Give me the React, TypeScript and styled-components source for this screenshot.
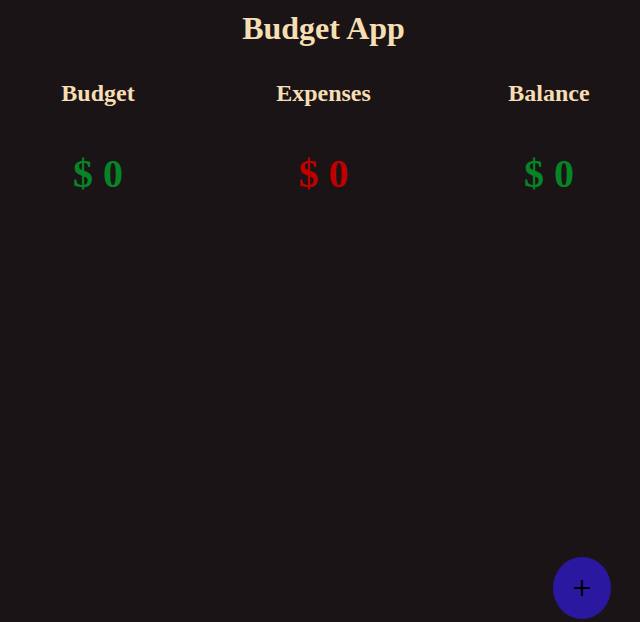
import React from "react";
import styled, { createGlobalStyle } from "styled-components";

const Global = createGlobalStyle`
  html, body { margin: 0; padding: 0; }
  body {
    background: #1b1416;
    font-family: "Liberation Serif", "Times New Roman", serif;
    min-height: 622px;
  }
`;

const Page = styled.div`
  padding: 0 16px 0 23px;
`;

const Title = styled.h1`
  margin: 0;
  padding-top: 10px;
  font-size: 32px;
  line-height: 37px;
  font-weight: 700;
  color: #f5deb3;
  text-align: center;
`;

const Stats = styled.div`
  display: flex;
  justify-content: space-between;
  margin-top: 32px;
`;

const Column = styled.div`
  width: 150px;
  display: flex;
  flex-direction: column;
  align-items: center;
`;

const Label = styled.h2`
  margin: 0;
  font-size: 24px;
  line-height: 28px;
  font-weight: 700;
  color: #f5deb3;
`;

const Amount = styled.div<{ $tone: "good" | "bad" }>`
  margin-top: 44px;
  font-size: 40px;
  line-height: 46px;
  font-weight: 700;
  color: ${(p) => (p.$tone === "good" ? "#058526" : "#bf0000")};
`;

const AddButton = styled.button`
  position: fixed;
  left: 553px;
  top: 557px;
  width: 58px;
  height: 62px;
  border-radius: 50%;
  border: none;
  background: #2a18a0;
  color: #000;
  font-family: "DejaVu Sans", sans-serif;
  font-size: 25px;
  line-height: 1;
  padding: 0 0 2px;
  display: flex;
  align-items: center;
  justify-content: center;
  cursor: pointer;
`;

const stats: { label: string; tone: "good" | "bad" }[] = [
  { label: "Budget", tone: "good" },
  { label: "Expenses", tone: "bad" },
  { label: "Balance", tone: "good" },
];

export default function App() {
  return (
    <>
      <Global />
      <Page>
        <Title>Budget App</Title>
        <Stats>
          {stats.map((s) => (
            <Column key={s.label}>
              <Label>{s.label}</Label>
              <Amount $tone={s.tone}>$ 0</Amount>
            </Column>
          ))}
        </Stats>
      </Page>
      <AddButton aria-label="Add">+</AddButton>
    </>
  );
}
